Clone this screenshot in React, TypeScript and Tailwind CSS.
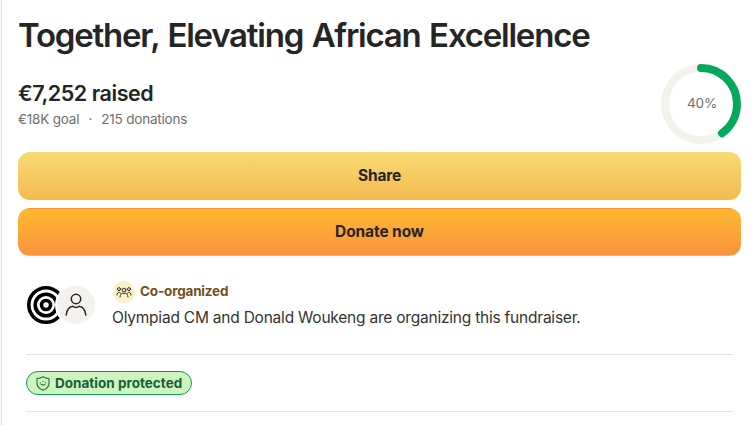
interface RingProps {
  percent: number
}

function ProgressRing({ percent }: RingProps) {
  const length = 2 * Math.PI * 36
  return (
    <div className="relative flex size-20 items-center justify-center">
      <svg className="absolute inset-0 size-20 -rotate-90" viewBox="0 0 80 80" fill="none" strokeWidth="8">
        <circle cx="40" cy="40" r="36" stroke="#f3f2ed" />
        <circle
          cx="40"
          cy="40"
          r="36"
          stroke="#02a95c"
          strokeLinecap="round"
          strokeDasharray={`${(length * percent) / 100} ${length}`}
        />
      </svg>
      <span className="relative -top-px left-px text-[13.5px] tracking-[-0.2px] text-[#6f6f6f]">{percent}%</span>
    </div>
  )
}

function TargetAvatar() {
  return (
    <svg className="size-[38px]" viewBox="0 0 38 38" fill="none" stroke="#000" strokeWidth="3.6">
      <circle cx="19" cy="19" r="17.2" />
      <circle cx="19" cy="19" r="10.8" />
      <circle cx="19" cy="19" r="4.5" />
    </svg>
  )
}

function PersonAvatar() {
  return (
    <div className="z-10 -ml-2 flex size-[38px] items-center justify-center rounded-full bg-[#f4f2ed] ring-2 ring-white">
      <svg
        className="size-6"
        viewBox="0 0 24 24"
        fill="none"
        stroke="#232323"
        strokeWidth="1.5"
        strokeLinecap="round"
        strokeLinejoin="round"
      >
        <circle cx="12" cy="6" r="4.700" />
        <path d="M2.200 22c.6-4.800 2.800-8 6.600-8.700 1 .9 2.100 1.300 3.200 1.300s2.200-.4 3.200-1.300c3.800.7 6 3.900 6.600 8.700" />
      </svg>
    </div>
  )
}

function TeamIcon() {
  return (
    <svg
      className="h-3 w-4"
      viewBox="0 0 16 12"
      fill="none"
      stroke="#2f2c20"
      strokeWidth="1"
      strokeLinecap="round"
      strokeLinejoin="round"
    >
      <circle cx="8" cy="4.100" r="1.900" />
      <circle cx="3" cy="3.100" r="1.500" />
      <circle cx="13" cy="3.100" r="1.500" />
      <path d="M4 11c.3-2.300 1-3.400 2.500-3.800.9.600 2.100.6 3 0C11 7.600 11.700 8.700 12 11" />
      <path d="M1 9c.2-1.900.8-2.700 2-2.700.8 0 1.400.3 1.800.9M15 9c-.2-1.900-.8-2.700-2-2.700-.8 0-1.400.3-1.800.9" />
    </svg>
  )
}

function ShieldIcon() {
  return (
    <svg
      className="h-[15px] w-[14px]"
      viewBox="0 0 14 15"
      fill="none"
      stroke="#17743f"
      strokeWidth="1.1"
      strokeLinecap="round"
      strokeLinejoin="round"
    >
      <path d="M7 .8C5.200 1.900 3.200 2.500 1 2.600v4.600c0 3.400 2.200 5.500 6 7 3.800-1.500 6-3.600 6-7V2.600C10.800 2.500 8.800 1.900 7 .8Z" />
      <path d="M5 8.200c1.100 1 2.900 1 4 0M4.200 6.700h.2M9.600 6.700h.2M7 5.300v.2" />
    </svg>
  )
}

export default function App() {
  return (
    <div className="h-[425px] overflow-hidden bg-white pl-px font-['Inter',sans-serif] text-[#252525]">
      <main className="h-full border-l border-[#dcdde0] pt-[15px] pr-3 pl-4">
        <h1 className="h-[41px] text-[33px] leading-[40px] font-semibold tracking-[-1.22px] [word-spacing:1.5px] whitespace-nowrap">
          Together, Elevating African Excellence
        </h1>

        <div className="mt-2 flex h-20 justify-between">
          <div className="pt-[15px]">
            <p className="text-[21.5px] leading-7 font-semibold tracking-[-0.45px]">€7,252 raised</p>
            <p className="mt-[2px] flex text-[13.5px] leading-5 tracking-[-0.2px] text-[#6f6f6f]">
              <span>€18K goal</span>
              <span className="w-[22px] text-center">·</span>
              <span>215 donations</span>
            </p>
          </div>
          <ProgressRing percent={40} />
        </div>

        <div className="mt-2 flex flex-col gap-2 text-[15.5px] font-bold">
          <button className="h-12 rounded-xl bg-linear-to-b from-[#f8db73] to-[#f2b94f] tracking-[-0.2px]">
            Share
          </button>
          <button className="h-12 rounded-xl border border-transparent bg-linear-to-b from-[#feb92e] to-[#f8923d] tracking-[-0.1px]">
            Donate now
          </button>
        </div>

        <div className="mx-2 flex h-[99px] items-center border-b border-[#e6e2d9]">
          <div className="flex pl-px">
            <TargetAvatar />
            <PersonAvatar />
          </div>
          <div className="ml-[17px]">
            <div className="flex h-[22px] items-center gap-[5px]">
              <span className="ml-px flex size-[22px] items-center justify-center rounded-full bg-[#faf1c7]">
                <TeamIcon />
              </span>
              <span className="text-[13.5px] font-bold tracking-[-0.18px] text-[#72511c]">Co-organized</span>
            </div>
            <p className="mt-[3px] text-[15.5px] leading-6 tracking-[-0.22px] whitespace-nowrap text-[#333]">
              Olympiad CM and Donald Woukeng are organizing this fundraiser.
            </p>
          </div>
        </div>

        <div className="mx-2 flex h-[57px] items-center border-b border-[#e9e2da]">
          <div className="flex h-6 w-[166px] items-center gap-[5px] rounded-full border border-[#0d9c55] bg-[#cff3bd] pl-[9px] text-[13.5px] font-bold tracking-[0.02px] whitespace-nowrap text-[#12603a]">
            <ShieldIcon />
            <span>Donation protected</span>
          </div>
        </div>
      </main>
    </div>
  )
}
